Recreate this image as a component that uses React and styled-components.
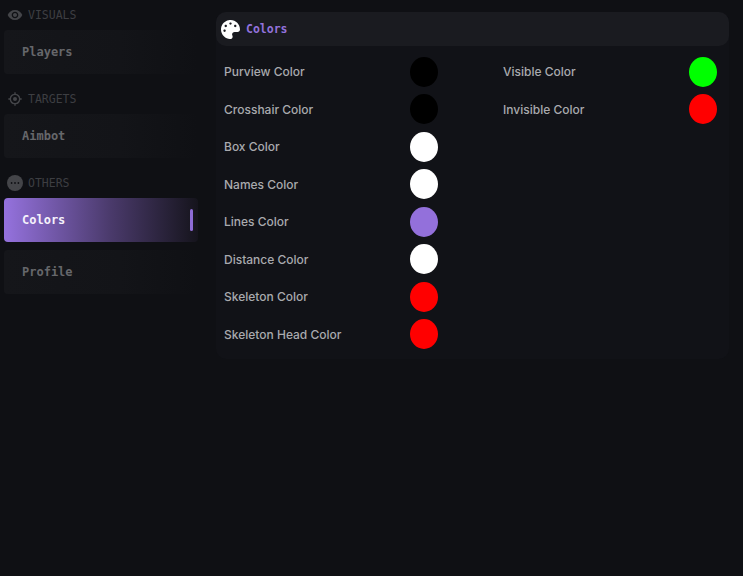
import React from 'react';
import styled, { createGlobalStyle } from 'styled-components';
import { FaPalette } from 'react-icons/fa';
import { MdVisibility } from 'react-icons/md';
import { BiTargetLock } from 'react-icons/bi';

const GlobalStyle = createGlobalStyle`
    html, body {
        margin: 0;
        height: 100%;
        background: #0f1014;
    }
    #root {
        height: 100%;
    }
`

const Page = styled.div`
    width: 743px;
    height: 576px;
    display: flex;
    overflow: hidden;
    background: #0f1014;
`

const Sidebar = styled.aside`
    width: 194px;
    margin-left: 4px;
    padding-top: 7.5px;
    display: flex;
    flex-direction: column;
    flex-shrink: 0;
`

const SectionTitle = styled.div`
    height: 15px;
    margin: ${props => props.first ? '0' : '17.5px'} 0 7.5px 3px;
    display: flex;
    align-items: center;
    gap: 5px;
    font-family: "DejaVu Sans Mono", "Liberation Mono", monospace;
    font-size: 11.5px;
    color: #3d3e42;

    svg {
        width: 16px;
        height: 16px;
        color: #444549;
        flex-shrink: 0;
    }
`

const NavItem = styled.div`
    height: 44px;
    box-sizing: border-box;
    padding: 0 5px 0 18px;
    display: flex;
    align-items: center;
    justify-content: space-between;
    border-radius: 4px;
    font-family: "DejaVu Sans Mono", "Liberation Mono", monospace;
    font-size: 12px;
    font-weight: 700;
    color: ${props => props.active ? '#f4f1fb' : '#66676b'};
    background: ${props => props.active
        ? 'linear-gradient(90deg, #9572de 0%, #4a3a6b 55%, #15141c 100%)'
        : 'linear-gradient(90deg, #15161a 0%, #131418 60%, #0f1014 100%)'};

    & + & {
        margin-top: 8px;
    }
`

const ActiveBar = styled.span`
    width: 3px;
    height: 22px;
    border-radius: 2px;
    background: #8e6cd6;
`

const Main = styled.main`
    width: 513px;
    height: 347px;
    margin: 12px 0 0 18px;
    border-radius: 10px;
    background: #111217;
`

const PanelHeader = styled.header`
    height: 34px;
    padding-left: 5px;
    display: flex;
    align-items: center;
    gap: 6px;
    border-radius: 10px;
    background: #1a1b20;
    font-family: "DejaVu Sans Mono", "Liberation Mono", monospace;
    font-size: 11.5px;
    font-weight: 700;
    color: #9272dc;

    svg {
        width: 19px;
        height: 19px;
        color: #ffffff;
    }
`

const Columns = styled.div`
    padding: 7px 12px 0 8px;
    display: grid;
    grid-template-columns: 214px 214px;
    column-gap: 65px;
`

const Column = styled.div`
    display: flex;
    flex-direction: column;
`

const Row = styled.div`
    height: 37.5px;
    display: flex;
    align-items: center;
    justify-content: space-between;
    font-family: Inter, "Liberation Sans", sans-serif;
    font-size: 12px;
    font-weight: 500;
    color: #a9aaae;
`

const Swatch = styled.span`
    width: 28px;
    height: 30px;
    border-radius: 50%;
    background: ${props => props.color};
`

const OthersIcon = () => (
    <svg viewBox="0 0 16 16">
        <circle cx="8" cy="8" r="8" fill="currentColor" />
        <circle cx="4.6" cy="8" r="0.9" fill="#0f1014" />
        <circle cx="8" cy="8" r="0.9" fill="#0f1014" />
        <circle cx="11.4" cy="8" r="0.9" fill="#0f1014" />
    </svg>
)

const leftColors = [
    ['Purview Color', '#000000'],
    ['Crosshair Color', '#000000'],
    ['Box Color', '#ffffff'],
    ['Names Color', '#ffffff'],
    ['Lines Color', '#9370db'],
    ['Distance Color', '#ffffff'],
    ['Skeleton Color', '#ff0000'],
    ['Skeleton Head Color', '#ff0000'],
]

const rightColors = [
    ['Visible Color', '#00ff00'],
    ['Invisible Color', '#ff0000'],
]

const ColorColumn = ({ items }) => (
    <Column>
        {items.map(([label, color]) => (
            <Row key={label}>
                {label}
                <Swatch color={color} />
            </Row>
        ))}
    </Column>
)

const App = () => (
    <Page>
        <GlobalStyle />
        <Sidebar>
            <SectionTitle first><MdVisibility />VISUALS</SectionTitle>
            <NavItem>Players</NavItem>
            <SectionTitle><BiTargetLock />TARGETS</SectionTitle>
            <NavItem>Aimbot</NavItem>
            <SectionTitle><OthersIcon />OTHERS</SectionTitle>
            <NavItem active>Colors<ActiveBar /></NavItem>
            <NavItem>Profile</NavItem>
        </Sidebar>
        <Main>
            <PanelHeader><FaPalette />Colors</PanelHeader>
            <Columns>
                <ColorColumn items={leftColors} />
                <ColorColumn items={rightColors} />
            </Columns>
        </Main>
    </Page>
)

export default App;
